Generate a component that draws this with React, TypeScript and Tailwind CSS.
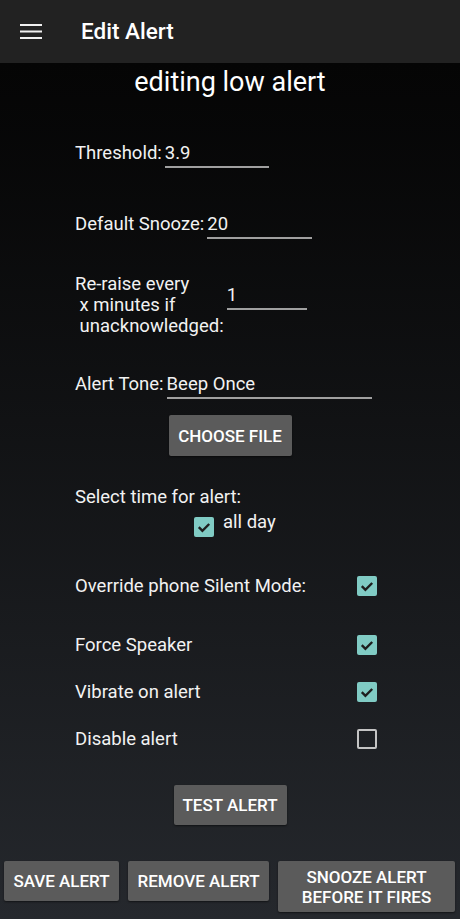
import React from "react";

const font = { fontFamily: "Roboto, 'Noto Sans', sans-serif" };

function Check({ on }: { on: boolean }) {
  if (!on) {
    return <div className="w-[20px] h-[20px] rounded-[2px] border-2 border-[#c4c4c4]" />;
  }
  return (
    <div className="w-[20px] h-[20px] rounded-[2px] bg-[#80cbc4] flex items-center justify-center">
      <svg width="20" height="20" viewBox="0 0 20 20">
        <path d="M4.8 10.2 L8.4 13.8 L15.2 7" fill="none" stroke="#1e1e1e" strokeWidth="2.4" />
      </svg>
    </div>
  );
}

function Btn({ children, className = "" }: { children: React.ReactNode; className?: string }) {
  return (
    <div
      className={
        "flex items-center justify-center rounded-[2px] bg-[#5b5b5b] text-white text-[17px] font-medium leading-[20px] text-center shadow-[0_1px_2px_rgba(0,0,0,0.5)] " +
        className
      }
    >
      {children}
    </div>
  );
}

function Field({ value, width }: { value: string; width: number }) {
  return (
    <div
      className="ml-[3px] h-[27px] border-b-2 border-[#a0a0a0] leading-[24px] text-[18.5px]"
      style={{ width }}
    >
      {value}
    </div>
  );
}

function ToggleRow({ label, on, mt }: { label: string; on: boolean; mt: string }) {
  return (
    <div className={"ml-[75px] w-[302px] h-[24px] flex items-center justify-between " + mt}>
      <span className="text-[18.5px] leading-[24px]">{label}</span>
      <Check on={on} />
    </div>
  );
}

export default function App() {
  return (
    <div className="w-[460px] h-[919px] flex flex-col text-[#f2f2f2]" style={font}>
      <div className="h-[63px] bg-[#222222] flex items-center shrink-0">
        <svg className="ml-[20px]" width="22" height="15" viewBox="0 0 22 15">
          <rect x="0" y="0" width="22" height="2" fill="#f0f0f0" />
          <rect x="0" y="6.5" width="22" height="2" fill="#f0f0f0" />
          <rect x="0" y="13" width="22" height="2" fill="#f0f0f0" />
        </svg>
        <span className="ml-[39px] text-[22.5px] font-medium text-white">Edit Alert</span>
      </div>

      <div className="flex-1 flex flex-col bg-gradient-to-b from-[#050505] to-[#25282d]">
        <div className="mt-[3px] h-[32px] text-center text-[27px] leading-[32px] text-white">
          editing low alert
        </div>

        <div className="mt-[43px] ml-[75px] h-[28px] flex items-start text-[18.5px] leading-[24px]">
          <span>Threshold:</span>
          <Field value="3.9" width={104} />
        </div>

        <div className="mt-[43px] ml-[75px] h-[28px] flex items-start text-[18.5px] leading-[24px]">
          <span>Default Snooze:</span>
          <Field value="20" width={105} />
        </div>

        <div className="mt-[34px] ml-[75px] h-[63px] flex items-start text-[18.5px]">
          <span className="whitespace-pre leading-[21px]">{"Re-raise every\n x minutes if\n unacknowledged:"}</span>
          <div className="mt-[9px]">
            <Field value="1" width={80} />
          </div>
        </div>

        <div className="mt-[35px] ml-[75px] h-[28px] flex items-start text-[18.5px] leading-[24px]">
          <span>Alert Tone:</span>
          <Field value="Beep Once" width={205} />
        </div>

        <div className="mt-[15px] flex justify-center">
          <Btn className="w-[123px] h-[41px]">CHOOSE FILE</Btn>
        </div>

        <div className="mt-[29px] ml-[75px] h-[24px] text-[18.5px] leading-[24px]">Select time for alert:</div>

        <div className="mt-[8px] ml-[194px] h-[20px] flex items-start">
          <Check on />
          <span className="ml-[9px] -mt-[7px] text-[18.5px] leading-[24px]">all day</span>
        </div>

        <ToggleRow label="Override phone Silent Mode:" on mt="mt-[37px]" />
        <ToggleRow label="Force Speaker" on mt="mt-[35px]" />
        <ToggleRow label="Vibrate on alert" on mt="mt-[23px]" />
        <ToggleRow label="Disable alert" on={false} mt="mt-[23px]" />

        <div className="mt-[34px] flex justify-center">
          <Btn className="w-[113px] h-[40px]">TEST ALERT</Btn>
        </div>

        <div className="mt-[36px] ml-[4px] flex items-start gap-[9px]">
          <Btn className="w-[115px] h-[40px]">SAVE ALERT</Btn>
          <Btn className="w-[141px] h-[40px]">REMOVE ALERT</Btn>
          <Btn className="w-[177px] h-[51px]">
            SNOOZE ALERT
            <br />
            BEFORE IT FIRES
          </Btn>
        </div>
      </div>
    </div>
  );
}
